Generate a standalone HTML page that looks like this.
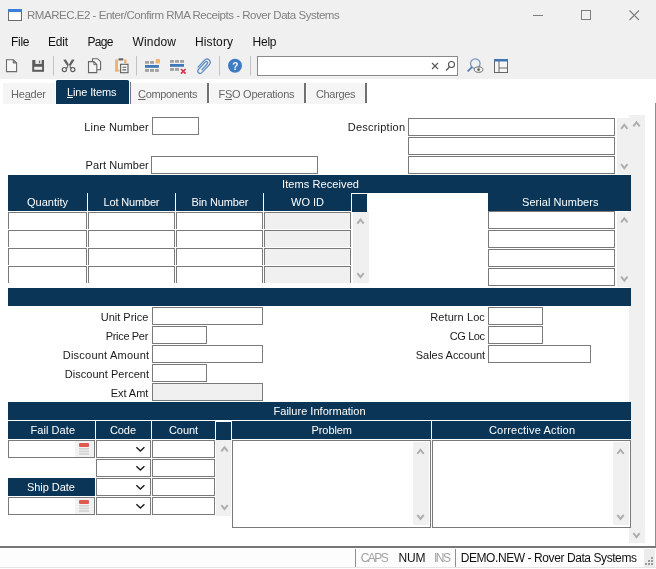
<!DOCTYPE html>
<html lang="en"><head><meta charset="utf-8"><title>RMAREC.E2 - Enter/Confirm RMA Receipts - Rover Data Systems</title>
<style>
html,body{margin:0;padding:0;}
body{width:656px;height:569px;overflow:hidden;background:#fff;font-family:"Liberation Sans", sans-serif;}
#w{position:relative;width:656px;height:569px;overflow:hidden;background:#fff;}
#w div,#w span.t,#w svg{position:absolute;box-sizing:border-box;}
.i{border:1px solid #7a7a7a;background:#fff;}
.g{background:#f0f0f0;}
.c{border-bottom:none;}
.t{white-space:pre;}
#tx{left:0;top:0;width:656px;height:569px;will-change:transform;}
.t u{text-decoration:underline;text-underline-offset:1px;}
</style></head>
<body><div id="w">
<div style="left:0px;top:0px;width:656px;height:79px;background:#f0f0f0;"></div>
<div style="left:0px;top:79px;width:656px;height:490px;background:#fff;"></div>
<div style="left:3px;top:83px;width:52px;height:20.5px;background:#f5f5f5;"></div>
<div style="left:56px;top:80px;width:73.4px;height:23.6px;background:#0a3556;border-radius:1.5px 1.5px 0 0;"></div>
<div style="left:131px;top:83px;width:76.5px;height:20.5px;background:#f5f5f5;"></div>
<div style="left:209.5px;top:83px;width:95px;height:20.5px;background:#f5f5f5;"></div>
<div style="left:306.5px;top:83px;width:59px;height:20.5px;background:#f5f5f5;"></div>
<div style="left:130px;top:82px;width:1px;height:22px;background:#6f7780;"></div>
<div style="left:207px;top:83px;width:2px;height:20px;background:#707070;"></div>
<div style="left:304px;top:83px;width:2px;height:20px;background:#707070;"></div>
<div style="left:365px;top:83px;width:2px;height:20px;background:#707070;"></div>
<div style="left:655px;top:103px;width:1px;height:445px;background:#8c8c8c;"></div>
<div style="left:0px;top:546px;width:656px;height:2px;background:#777;"></div>
<div style="left:629.4px;top:115.2px;width:15.4px;height:427.6px;background:#f0f0f0;"></div>
<div class="i" style="left:152px;top:117px;width:47px;height:18px"></div>
<div class="i" style="left:151px;top:156px;width:167px;height:18px"></div>
<div class="i" style="left:408px;top:118px;width:207px;height:18px"></div>
<div class="i" style="left:408px;top:137px;width:207px;height:18px"></div>
<div class="i" style="left:408px;top:156px;width:207px;height:18px"></div>
<div style="left:617px;top:118px;width:14px;height:56px;background:#f0f0f0;"></div>
<div style="left:8px;top:175px;width:623px;height:36px;background:#0a3556;"></div>
<div style="left:368px;top:193px;width:120px;height:18px;background:#fff;"></div>
<div style="left:351px;top:193px;width:17px;height:1px;background:#fff;"></div>
<div style="left:352px;top:211px;width:15px;height:1px;background:#0a3556;"></div>
<div style="left:87px;top:193px;width:1px;height:18px;background:#fff;"></div>
<div style="left:175px;top:193px;width:1px;height:18px;background:#fff;"></div>
<div style="left:263px;top:193px;width:1px;height:18px;background:#fff;"></div>
<div style="left:351px;top:193px;width:1px;height:18px;background:#fff;"></div>
<div style="left:367px;top:193px;width:1px;height:18px;background:#fff;"></div>
<div style="left:8px;top:212px;width:344px;height:71px;overflow:hidden"><div class="i c" style="left:0px;top:0px;width:79px;height:17.3px"></div><div class="i c" style="left:80px;top:0px;width:87px;height:17.3px"></div><div class="i c" style="left:168px;top:0px;width:87px;height:17.3px"></div><div class="i c g" style="left:256px;top:0px;width:87px;height:17.3px"></div><div class="i c" style="left:0px;top:18px;width:79px;height:17.3px"></div><div class="i c" style="left:80px;top:18px;width:87px;height:17.3px"></div><div class="i c" style="left:168px;top:18px;width:87px;height:17.3px"></div><div class="i c g" style="left:256px;top:18px;width:87px;height:17.3px"></div><div class="i c" style="left:0px;top:36px;width:79px;height:17.3px"></div><div class="i c" style="left:80px;top:36px;width:87px;height:17.3px"></div><div class="i c" style="left:168px;top:36px;width:87px;height:17.3px"></div><div class="i c g" style="left:256px;top:36px;width:87px;height:17.3px"></div><div class="i c" style="left:0px;top:54px;width:79px;height:17.3px"></div><div class="i c" style="left:80px;top:54px;width:87px;height:17.3px"></div><div class="i c" style="left:168px;top:54px;width:87px;height:17.3px"></div><div class="i c g" style="left:256px;top:54px;width:87px;height:17.3px"></div></div>
<div style="left:352.8px;top:212px;width:16px;height:71px;background:#f0f0f0;"></div>
<div class="i" style="left:488px;top:211px;width:127px;height:18px"></div>
<div class="i" style="left:488px;top:230px;width:127px;height:18px"></div>
<div class="i" style="left:488px;top:249px;width:127px;height:18px"></div>
<div class="i" style="left:488px;top:268px;width:127px;height:18px"></div>
<div style="left:616.5px;top:211.5px;width:14.5px;height:75px;background:#f0f0f0;"></div>
<div style="left:8px;top:288px;width:623px;height:18px;background:#0a3556;"></div>
<div class="i" style="left:152px;top:307px;width:111px;height:18px"></div>
<div class="i" style="left:152px;top:326px;width:55px;height:18px"></div>
<div class="i" style="left:152px;top:345px;width:111px;height:18px"></div>
<div class="i" style="left:152px;top:364px;width:55px;height:18px"></div>
<div class="i g" style="left:152px;top:383px;width:111px;height:18px"></div>
<div class="i" style="left:488px;top:307px;width:55px;height:18px"></div>
<div class="i" style="left:488px;top:326px;width:55px;height:18px"></div>
<div class="i" style="left:488px;top:345px;width:103px;height:18px"></div>
<div style="left:8px;top:402px;width:623px;height:18px;background:#0a3556;"></div>
<div style="left:8px;top:421px;width:87px;height:18px;background:#0a3556;"></div>
<div style="left:96px;top:421px;width:55px;height:18px;background:#0a3556;"></div>
<div style="left:152px;top:421px;width:63px;height:18px;background:#0a3556;"></div>
<div style="left:216px;top:422px;width:15px;height:18px;background:#0a3556;"></div>
<div style="left:232px;top:421px;width:199px;height:18px;background:#0a3556;"></div>
<div style="left:432px;top:421px;width:199px;height:18px;background:#0a3556;"></div>
<div style="left:8px;top:478px;width:87px;height:18px;background:#0a3556;"></div>
<div class="i" style="left:8px;top:440px;width:87px;height:18px"></div>
<div style="left:75px;top:441px;width:19px;height:16px;background:#f2f2f2;"></div>
<div class="i" style="left:8px;top:497px;width:87px;height:18px"></div>
<div style="left:75px;top:498px;width:19px;height:16px;background:#f2f2f2;"></div>
<div class="i" style="left:96px;top:440px;width:55px;height:18px"></div>
<div class="i" style="left:152px;top:440px;width:63px;height:18px"></div>
<div class="i" style="left:96px;top:459px;width:55px;height:18px"></div>
<div class="i" style="left:152px;top:459px;width:63px;height:18px"></div>
<div class="i" style="left:96px;top:478px;width:55px;height:18px"></div>
<div class="i" style="left:152px;top:478px;width:63px;height:18px"></div>
<div class="i" style="left:96px;top:497px;width:55px;height:18px"></div>
<div class="i" style="left:152px;top:497px;width:63px;height:18px"></div>
<div style="left:216px;top:440px;width:15px;height:76px;background:#f0f0f0;"></div>
<div class="i" style="left:232px;top:440px;width:199px;height:88px"></div>
<div style="left:413.3px;top:442px;width:16.2px;height:83px;background:#f0f0f0;"></div>
<div class="i" style="left:432px;top:440px;width:199px;height:88px"></div>
<div style="left:613.3px;top:442px;width:16.2px;height:83px;background:#f0f0f0;"></div>
<div style="left:0px;top:548px;width:656px;height:21px;background:#fdfdfd;"></div>
<div style="left:0px;top:567px;width:656px;height:1px;background:#e6e6e6;"></div>
<div style="left:355px;top:549px;width:1px;height:18px;background:#909090;"></div>
<div style="left:455px;top:549px;width:1px;height:18px;background:#909090;"></div>
<div style="left:644px;top:549px;width:11px;height:18px;background:#ececec;"></div>
<svg width="656" height="569" viewBox="0 0 656 569" style="left:0;top:0">
<rect x="8.5" y="9.5" width="13" height="11" fill="#fff" stroke="#6b6b6b" stroke-width="1"/><rect x="8" y="9" width="14" height="3" fill="#3c80d6"/>
<path d="M533,15.5 H543" stroke="#7e7e7e" stroke-width="1" fill="none"/><rect x="581.5" y="10.5" width="9" height="9" fill="none" stroke="#7e7e7e" stroke-width="1"/><path d="M629.5,10.5 L639,20 M639,10.5 L629.5,20" stroke="#7e7e7e" stroke-width="1.1" fill="none"/>
<path d="M6.5,59.7 H13.2 L16.6,63.1 V71.6 H6.5 Z" fill="#f7f7f7" stroke="#6a6a6a" stroke-width="1.1"/><path d="M13.2,59.7 V63.1 H16.6 Z" fill="#8a8a8a" stroke="#6a6a6a" stroke-width="0.8"/>
<path d="M32.2,60 H44 V71.8 H32.2 Z" fill="#5c5c5c"/><rect x="35.4" y="60" width="6.3" height="3.9" fill="#ededed"/><rect x="38.9" y="60.6" width="1.3" height="2.6" fill="#6a6a6a"/><rect x="34.2" y="66.8" width="7.9" height="3" fill="#efefef"/>
<path d="M53.5,56 V75.5" stroke="#c2c2c2" stroke-width="1"/>
<path d="M136.5,56 V75.5" stroke="#c2c2c2" stroke-width="1"/>
<path d="M219.5,56 V75.5" stroke="#c2c2c2" stroke-width="1"/>
<path d="M250.5,56 V75.5" stroke="#c2c2c2" stroke-width="1"/>
<path d="M63.2,59.8 L65.9,59.4 L70.3,67 L68.7,68.2 Z M74.6,59.8 L71.9,59.4 L67.5,67 L69.1,68.2 Z" fill="#606060"/><path d="M68,66.5 L66,68.3 M69.8,66.5 L71.6,68.3" stroke="#5f5f5f" stroke-width="1.1" fill="none"/><circle cx="64.4" cy="69.6" r="2.1" fill="none" stroke="#5f5f5f" stroke-width="1.2"/><circle cx="72.8" cy="69.6" r="2.1" fill="none" stroke="#5f5f5f" stroke-width="1.2"/>
<path d="M92.5,58.7 H97.6 L100.6,61.7 V69.8 H92.5 Z" fill="#f4f4f4" stroke="#666" stroke-width="1.1"/><path d="M88.5,61.6 H93.8 L96.8,64.6 V72.6 H88.5 Z" fill="#f4f4f4" stroke="#666" stroke-width="1.1"/><path d="M93.8,61.6 V64.6 H96.8" fill="none" stroke="#666" stroke-width="0.9"/>
<rect x="115.1" y="59.5" width="2.9" height="12" fill="#eeb274"/><rect x="115.1" y="69.6" width="4.6" height="1.9" fill="#eeb274"/><rect x="124" y="59.5" width="2.6" height="3.6" fill="#eeb274"/><rect x="118.4" y="58.2" width="5" height="2.3" rx="0.8" fill="#666"/><rect x="120.6" y="64.3" width="7.4" height="8.4" fill="#f7f7f7" stroke="#5e5e5e" stroke-width="1.1"/><path d="M122.4,67.2 H126.2 M122.4,69.9 H126.2" stroke="#5e5e5e" stroke-width="1.1"/>
<rect x="145" y="61" width="4" height="2.8" fill="#a2a2a2"/><rect x="150" y="61" width="4" height="2.8" fill="#a2a2a2"/><rect x="155.6" y="59" width="4.4" height="4.6" rx="1" fill="#f2b468"/><rect x="145" y="65" width="13.9" height="2.8" fill="#3f78b8"/><rect x="145" y="69" width="4" height="2.9" fill="#a2a2a2"/><rect x="150" y="69" width="4" height="2.9" fill="#a2a2a2"/><rect x="155" y="69" width="3.9" height="2.9" fill="#a2a2a2"/>
<rect x="170" y="60" width="4" height="2.8" fill="#a2a2a2"/><rect x="175" y="60" width="4" height="2.8" fill="#a2a2a2"/><rect x="180" y="60" width="4" height="2.8" fill="#a2a2a2"/><rect x="170" y="64" width="14" height="2.8" fill="#3f78b8"/><rect x="170" y="68" width="4" height="2.9" fill="#a2a2a2"/><rect x="175" y="68" width="4" height="2.9" fill="#a2a2a2"/><path d="M181,69 L185.6,73.6 M185.6,69 L181,73.6" stroke="#d0354a" stroke-width="1.6" fill="none"/>
<g transform="translate(8.6,3.7) scale(0.95)"><path d="M203.5,69.5 L209,63.5 C210.5,62 208.5,60 207,61.5 L200,69 C197.5,71.8 201,75 203.7,72.3 L211,64.5 C214.5,60.5 209.5,56 206,59.8 L199.5,66.8" fill="none" stroke="#628fc3" stroke-width="1.4" stroke-linecap="round"/></g>
<circle cx="235" cy="65.8" r="7" fill="#3d7cc3"/>
<rect x="257.5" y="56.5" width="200" height="19" fill="#fff" stroke="#8a8a8a"/>
<path d="M432,63 L438,69 M438,63 L432,69" stroke="#555" stroke-width="1.1" fill="none"/>
<circle cx="451.5" cy="64.5" r="3" fill="none" stroke="#555" stroke-width="1.1"/><path d="M449.5,67 L446,70.5" stroke="#555" stroke-width="1.3"/>
<circle cx="475.3" cy="63.6" r="4.8" fill="none" stroke="#6f97c8" stroke-width="1.2"/><path d="M472,67.2 L467.6,71.4" stroke="#4f7db3" stroke-width="1.7"/><ellipse cx="478.6" cy="69.6" rx="4.3" ry="2.7" fill="#f0f0f0" stroke="#6a6a6a" stroke-width="1"/><circle cx="478.6" cy="69.6" r="1.3" fill="#5a5a5a"/>
<rect x="494.5" y="60" width="13" height="12.5" fill="#f6f6f6" stroke="#666" stroke-width="1"/><rect x="494" y="59" width="14" height="2.5" fill="#3f74b5"/><path d="M499,61 V72.5 M499,68 H507.5" stroke="#666" stroke-width="1" fill="none"/>
<path d="M633.9,125.65 L636.5,122.35 L639.1,125.65" fill="none" stroke="#adadad" stroke-width="1.9" stroke-linecap="square"/>
<path d="M633.9,533.85 L636.5,537.15 L639.1,533.85" fill="none" stroke="#adadad" stroke-width="1.9" stroke-linecap="square"/>
<path d="M621.6999999999999,128.15 L624.3,124.85 L626.9,128.15" fill="none" stroke="#adadad" stroke-width="1.9" stroke-linecap="square"/>
<path d="M621.6999999999999,164.85 L624.3,168.15 L626.9,164.85" fill="none" stroke="#adadad" stroke-width="1.9" stroke-linecap="square"/>
<path d="M357.9,222.85 L360.5,219.54999999999998 L363.1,222.85" fill="none" stroke="#adadad" stroke-width="1.9" stroke-linecap="square"/>
<path d="M357.9,273.85 L360.5,277.15 L363.1,273.85" fill="none" stroke="#adadad" stroke-width="1.9" stroke-linecap="square"/>
<path d="M621.6999999999999,221.65 L624.3,218.35 L626.9,221.65" fill="none" stroke="#adadad" stroke-width="1.9" stroke-linecap="square"/>
<path d="M621.6999999999999,277.35 L624.3,280.65 L626.9,277.35" fill="none" stroke="#adadad" stroke-width="1.9" stroke-linecap="square"/>
<rect x="79" y="443" width="10" height="4" rx="1" fill="#dc5a50"/><rect x="79" y="448" width="10" height="1.6" fill="#d2d2d2"/><rect x="79" y="450.6" width="10" height="1.6" fill="#d2d2d2"/><rect x="79" y="453.2" width="10" height="1.6" fill="#d2d2d2"/>
<rect x="79" y="500" width="10" height="4" rx="1" fill="#dc5a50"/><rect x="79" y="505" width="10" height="1.6" fill="#d2d2d2"/><rect x="79" y="507.6" width="10" height="1.6" fill="#d2d2d2"/><rect x="79" y="510.2" width="10" height="1.6" fill="#d2d2d2"/>
<path d="M136.9,447.75 L140.4,451.04999999999995 L143.9,447.75" fill="none" stroke="#1a1a1a" stroke-width="1.4" stroke-linecap="square"/>
<path d="M136.9,466.75 L140.4,470.04999999999995 L143.9,466.75" fill="none" stroke="#1a1a1a" stroke-width="1.4" stroke-linecap="square"/>
<path d="M136.9,485.75 L140.4,489.04999999999995 L143.9,485.75" fill="none" stroke="#1a1a1a" stroke-width="1.4" stroke-linecap="square"/>
<path d="M136.9,504.75 L140.4,508.04999999999995 L143.9,504.75" fill="none" stroke="#1a1a1a" stroke-width="1.4" stroke-linecap="square"/>
<path d="M221.9,450.65 L224.5,447.35 L227.1,450.65" fill="none" stroke="#adadad" stroke-width="1.9" stroke-linecap="square"/>
<path d="M221.9,505.85 L224.5,509.15 L227.1,505.85" fill="none" stroke="#adadad" stroke-width="1.9" stroke-linecap="square"/>
<path d="M417.9,453.04999999999995 L420.5,449.75 L423.1,453.04999999999995" fill="none" stroke="#adadad" stroke-width="1.9" stroke-linecap="square"/>
<path d="M417.9,515.65 L420.5,518.9499999999999 L423.1,515.65" fill="none" stroke="#adadad" stroke-width="1.9" stroke-linecap="square"/>
<path d="M617.9,453.04999999999995 L620.5,449.75 L623.1,453.04999999999995" fill="none" stroke="#adadad" stroke-width="1.9" stroke-linecap="square"/>
<path d="M617.9,515.65 L620.5,518.9499999999999 L623.1,515.65" fill="none" stroke="#adadad" stroke-width="1.9" stroke-linecap="square"/>
<rect x="651" y="557" width="2" height="2" fill="#9a9a9a"/><rect x="648" y="560" width="2" height="2" fill="#9a9a9a"/><rect x="651" y="560" width="2" height="2" fill="#9a9a9a"/><rect x="645" y="563" width="2" height="2" fill="#9a9a9a"/><rect x="648" y="563" width="2" height="2" fill="#9a9a9a"/><rect x="651" y="563" width="2" height="2" fill="#9a9a9a"/>
</svg>
<div id="tx">
<span class="t" style="left:27px;top:8px;font-size:11.5px;line-height:14px;color:#808080;letter-spacing:-0.47px;">RMAREC.E2 - Enter/Confirm RMA Receipts - Rover Data Systems</span>
<span class="t" style="left:11px;top:34px;font-size:12px;line-height:16px;color:#111;letter-spacing:-0.28px;">File</span>
<span class="t" style="left:48px;top:34px;font-size:12px;line-height:16px;color:#111;letter-spacing:-0.23px;">Edit</span>
<span class="t" style="left:87.5px;top:34px;font-size:12px;line-height:16px;color:#111;letter-spacing:-0.68px;">Page</span>
<span class="t" style="left:132.5px;top:34px;font-size:12px;line-height:16px;color:#111;letter-spacing:0.16px;">Window</span>
<span class="t" style="left:195px;top:34px;font-size:12px;line-height:16px;color:#111;letter-spacing:0.11px;">History</span>
<span class="t" style="left:252.5px;top:34px;font-size:12px;line-height:16px;color:#111;letter-spacing:-0.23px;">Help</span>
<span class="t" style="left:232.3px;top:60px;font-size:10px;line-height:13px;color:#fff;font-weight:bold;">?</span>
<span class="t" style="left:11px;top:87px;font-size:11px;line-height:14px;color:#666;letter-spacing:-0.22px;">He<u>a</u>der</span>
<span class="t" style="left:67px;top:85px;font-size:11px;line-height:14px;color:#fff;letter-spacing:-0.14px;"><u>L</u>ine Items</span>
<span class="t" style="left:138px;top:87px;font-size:11px;line-height:14px;color:#666;letter-spacing:-0.32px;"><u>C</u>omponents</span>
<span class="t" style="left:218.5px;top:87px;font-size:11px;line-height:14px;color:#666;letter-spacing:-0.27px;">F<u>S</u>O Operations</span>
<span class="t" style="left:316px;top:87px;font-size:11px;line-height:14px;color:#666;letter-spacing:-0.35px;">Char<u>g</u>es</span>
<span class="t" style="left:84.3px;top:120px;font-size:11px;line-height:14px;color:#1a1a1a;letter-spacing:0.15px;">Line Number</span>
<span class="t" style="left:85.5px;top:158px;font-size:11px;line-height:14px;color:#1a1a1a;letter-spacing:0.09px;">Part Number</span>
<span class="t" style="left:347.8px;top:120px;font-size:11px;line-height:14px;color:#1a1a1a;letter-spacing:0.22px;">Description</span>
<span class="t" style="left:282px;top:177px;font-size:11px;line-height:14px;color:#fff;letter-spacing:0.09px;">Items Received</span>
<span class="t" style="left:27px;top:195px;font-size:11px;line-height:14px;color:#fff;">Quantity</span>
<span class="t" style="left:103.5px;top:195px;font-size:11px;line-height:14px;color:#fff;letter-spacing:-0.16px;">Lot Number</span>
<span class="t" style="left:191.5px;top:195px;font-size:11px;line-height:14px;color:#fff;letter-spacing:-0.12px;">Bin Number</span>
<span class="t" style="left:291px;top:195px;font-size:11px;line-height:14px;color:#fff;">WO ID</span>
<span class="t" style="left:522px;top:195px;font-size:11px;line-height:14px;color:#fff;letter-spacing:0.05px;">Serial Numbers</span>
<span class="t" style="left:100.8px;top:310px;font-size:11px;line-height:14px;color:#1a1a1a;letter-spacing:-0.02px;">Unit Price</span>
<span class="t" style="left:105.8px;top:329px;font-size:11px;line-height:14px;color:#1a1a1a;letter-spacing:-0.34px;">Price Per</span>
<span class="t" style="left:62.8px;top:348px;font-size:11px;line-height:14px;color:#1a1a1a;letter-spacing:0.22px;">Discount Amount</span>
<span class="t" style="left:64.8px;top:367px;font-size:11px;line-height:14px;color:#1a1a1a;letter-spacing:0.03px;">Discount Percent</span>
<span class="t" style="left:110.8px;top:386px;font-size:11px;line-height:14px;color:#1a1a1a;letter-spacing:-0.07px;">Ext Amt</span>
<span class="t" style="left:430.3px;top:310px;font-size:11px;line-height:14px;color:#1a1a1a;letter-spacing:0.08px;">Return Loc</span>
<span class="t" style="left:449.8px;top:329px;font-size:11px;line-height:14px;color:#1a1a1a;letter-spacing:-0.4px;">CG Loc</span>
<span class="t" style="left:415.8px;top:348px;font-size:11px;line-height:14px;color:#1a1a1a;letter-spacing:-0.03px;">Sales Account</span>
<span class="t" style="left:273.5px;top:404px;font-size:11px;line-height:14px;color:#fff;letter-spacing:0.02px;">Failure Information</span>
<span class="t" style="left:30.5px;top:423px;font-size:11px;line-height:14px;color:#fff;letter-spacing:0.06px;">Fail Date</span>
<span class="t" style="left:110px;top:423px;font-size:11px;line-height:14px;color:#fff;letter-spacing:-0.1px;">Code</span>
<span class="t" style="left:169px;top:423px;font-size:11px;line-height:14px;color:#fff;letter-spacing:-0.09px;">Count</span>
<span class="t" style="left:311.5px;top:423px;font-size:11px;line-height:14px;color:#fff;letter-spacing:-0.08px;">Problem</span>
<span class="t" style="left:489px;top:423px;font-size:11px;line-height:14px;color:#fff;letter-spacing:0.18px;">Corrective Action</span>
<span class="t" style="left:27px;top:480px;font-size:11px;line-height:14px;color:#fff;letter-spacing:-0.04px;">Ship Date</span>
<span class="t" style="left:360.7px;top:550px;font-size:12px;line-height:16px;color:#a2a2a2;letter-spacing:-1.53px;">CAPS</span>
<span class="t" style="left:398.5px;top:550px;font-size:12px;line-height:16px;color:#111;letter-spacing:-0.21px;">NUM</span>
<span class="t" style="left:434px;top:550px;font-size:12px;line-height:16px;color:#a2a2a2;letter-spacing:-1.51px;">INS</span>
<span class="t" style="left:460.7px;top:550px;font-size:12px;line-height:16px;color:#111;letter-spacing:-0.42px;">DEMO.NEW - Rover Data Systems</span>
</div>
</div></body></html>
